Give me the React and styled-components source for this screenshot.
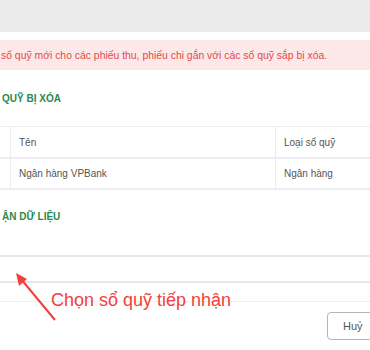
import styled, { createGlobalStyle } from "styled-components"

const GlobalStyle = createGlobalStyle`
    body{
        margin: 0;
        background-color: #FFFFFF;
        font-family: "Liberation Sans", Arial, sans-serif;
        overflow: hidden;
    }
`

const Khung = styled.div`
    position: relative;
    width: 370px;
    height: 350px;
    overflow: hidden;
`

const NenXam = styled.div`
    height: 32px;
    background-color: #EBEBEB;
`

const CanhBao = styled.div`
    margin-top: 8px;
    height: 30px;
    background-color: #FCE8E8;
    color: #E5484D;
    font-size: 10.4px;
    display: flex;
    align-items: center;
    padding-left: 1px;
    white-space: nowrap;
`

const TieuDe = styled.div`
    color: #2B8A4C;
    font-weight: 700;
    font-size: 10px;
    height: 14px;
    line-height: 14px;
    margin-top: ${({ $mt }) => $mt}px;
    padding-left: ${({ $pl }) => $pl || 0}px;
    white-space: nowrap;
`

const Bang = styled.table`
    margin-top: 20px;
    width: 400px;
    border-collapse: collapse;
    font-size: 10px;
    color: #555555;
    td{
        border-top: 1px solid #ECECF1;
        border-bottom: 2px solid #ECECF1;
        border-left: 1px solid #ECECF1;
        padding: 0 8px;
        white-space: nowrap;
    }
    tr:first-child td{ height: 30px; }
    tr:last-child td{ height: 29px; }
    td.le{ width: 10px; padding: 0 0 0 0; border-left: none; }
    td.ten{ width: 248px; }
`

const ONhap = styled.div`
    margin-top: 31px;
    height: 24px;
    border-top: 2px solid #E6E6EC;
    border-bottom: 2px solid #E6E6EC;
`

const ChanTrang = styled.div`
    margin-top: 18px;
    border-top: 1px solid #EEEEF2;
    display: flex;
    justify-content: flex-end;
    padding-top: 10px;
`

const NutHuy = styled.button`
    width: 60px;
    height: 28px;
    margin-right: -17px;
    background-color: #FFFFFF;
    border: 1px solid #B5B5B5;
    border-radius: 4px;
    font-family: inherit;
    font-size: 11px;
    color: #555555;
    text-align: left;
    padding-left: 15px;
`

const GhiChu = styled.div`
    position: absolute;
    left: 51px;
    top: 290px;
    color: #F2403C;
    font-size: 18px;
    white-space: nowrap;
`

const MuiTen = styled.svg`
    position: absolute;
    left: 0;
    top: 0;
`

const App = () => {
    return(
        <>
            <GlobalStyle/>
            <Khung>
                <NenXam/>
                <CanhBao>sổ quỹ mới cho các phiếu thu, phiếu chi gắn với các sổ quỹ sắp bị xóa.</CanhBao>
                <TieuDe $mt={22} $pl={2}>QUỸ BỊ XÓA</TieuDe>
                <Bang>
                    <tbody>
                        <tr>
                            <td className="le"></td>
                            <td className="ten">Tên</td>
                            <td>Loại sổ quỹ</td>
                        </tr>
                        <tr>
                            <td className="le"></td>
                            <td className="ten">Ngân hàng VPBank</td>
                            <td>Ngân hàng</td>
                        </tr>
                    </tbody>
                </Bang>
                <TieuDe $mt={20} $pl={2}>ẬN DỮ LIỆU</TieuDe>
                <ONhap/>
                <ChanTrang>
                    <NutHuy>Huỷ</NutHuy>
                </ChanTrang>
                <MuiTen width="370" height="350">
                    <line x1="55" y1="320" x2="21" y2="279" stroke="#F2403C" strokeWidth="2"/>
                    <polygon points="16,273 19,286 27,279" fill="#F2403C"/>
                </MuiTen>
                <GhiChu>Chọn sổ quỹ tiếp nhận</GhiChu>
            </Khung>
        </>
    )
}

export default App
